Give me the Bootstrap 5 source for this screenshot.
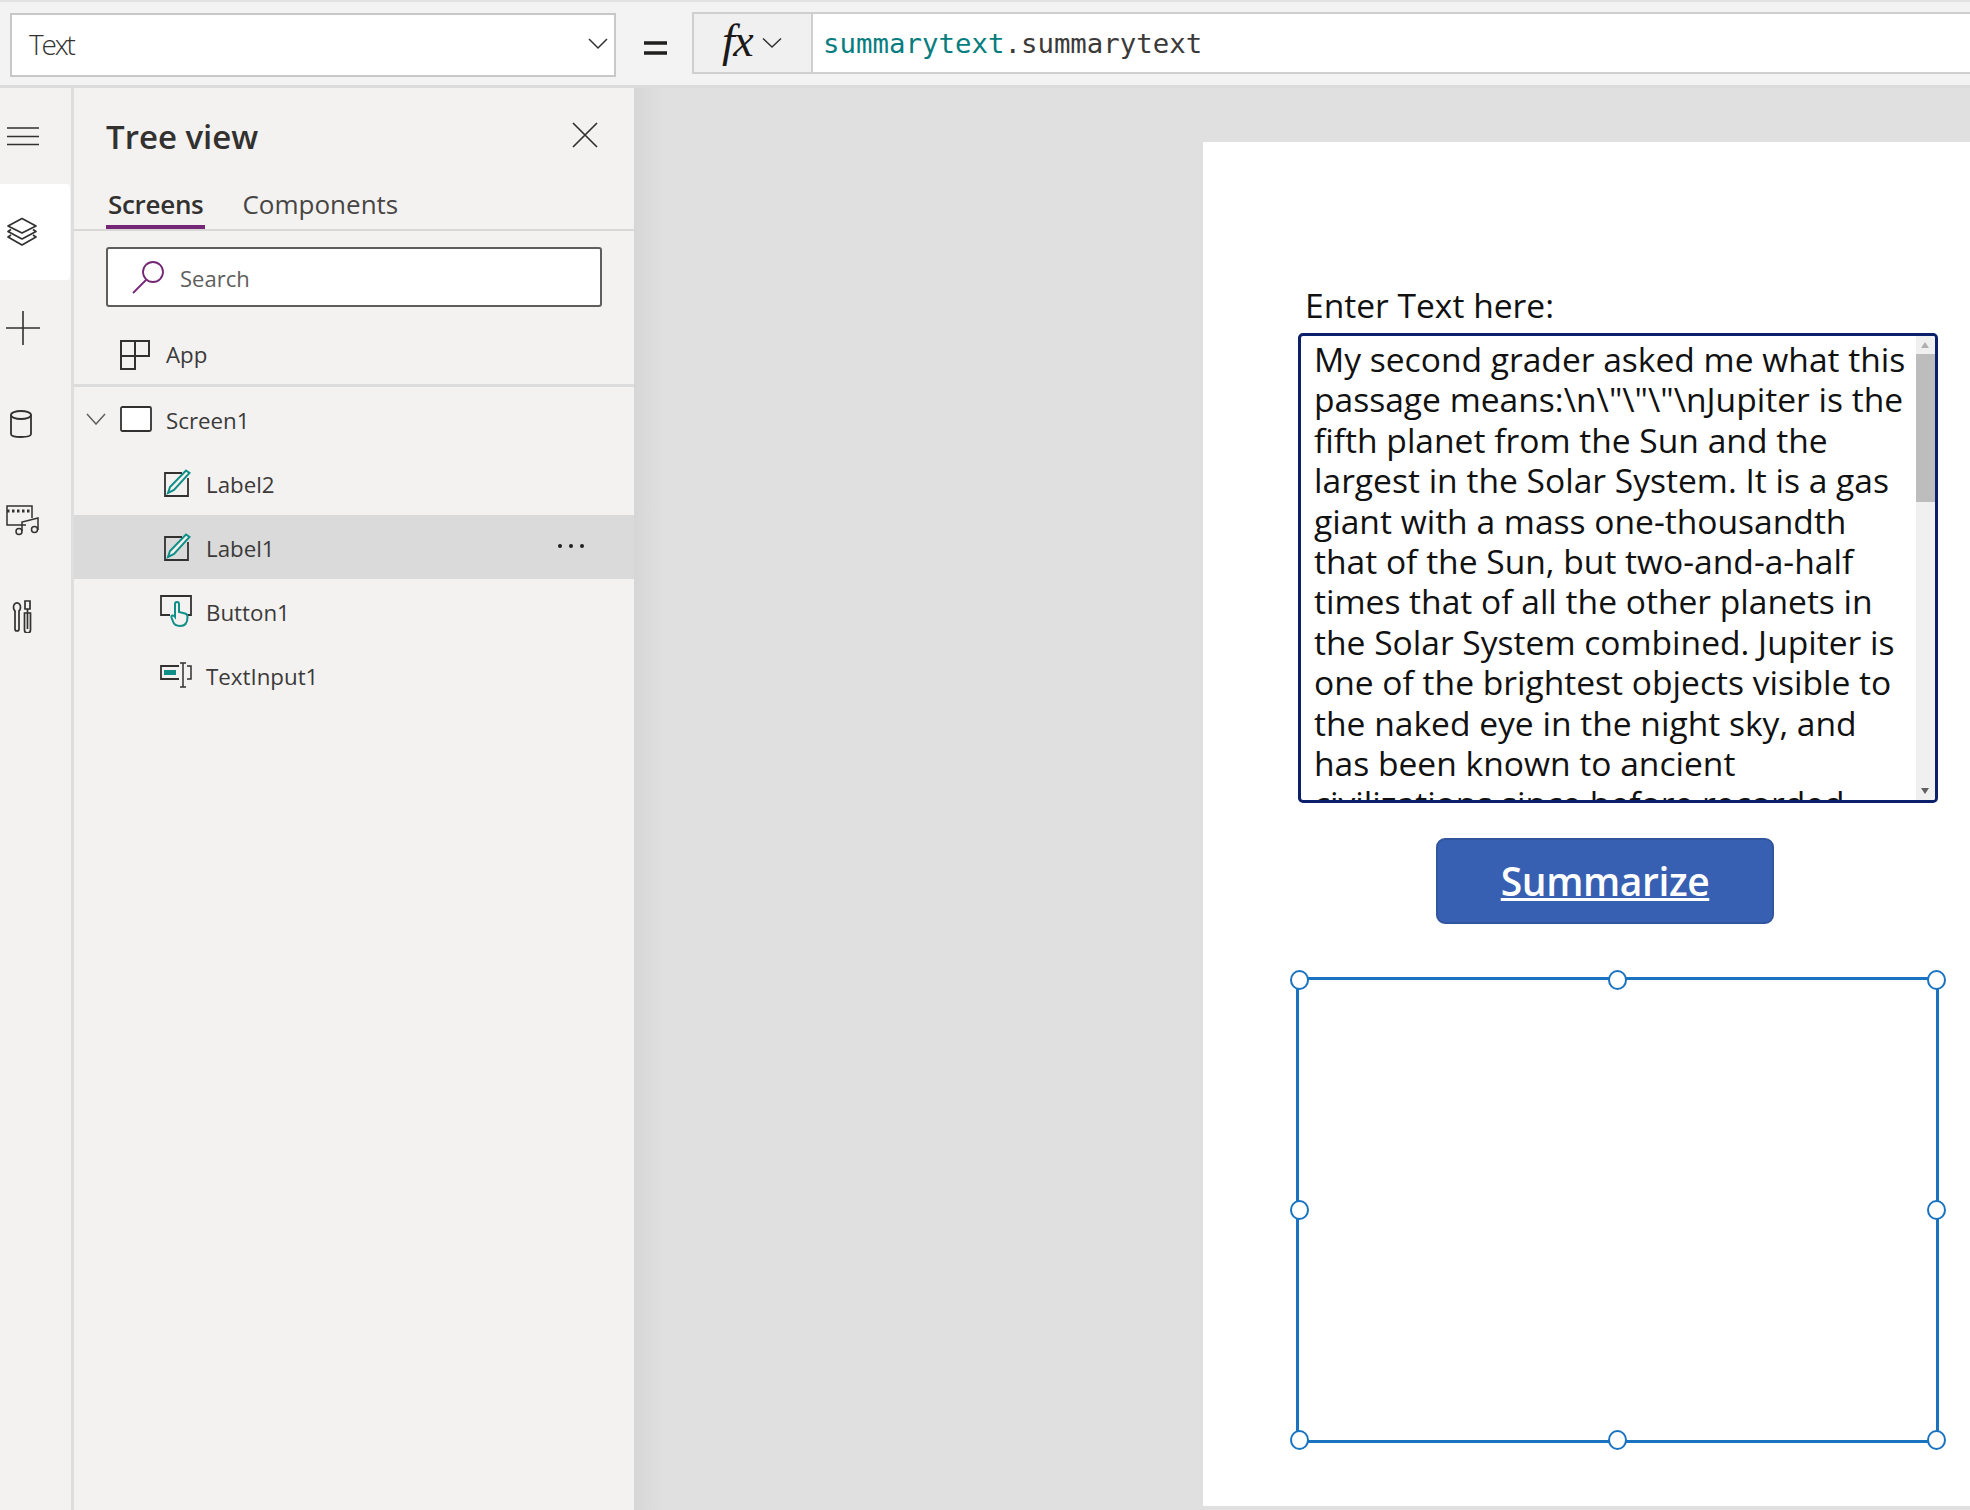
<!DOCTYPE html>
<html lang="en">
<head>
<meta charset="UTF-8" />
<meta name="viewport" content="width=device-width, initial-scale=1.0" />
<title>Tree view</title>
<link href="https://cdn.jsdelivr.net/npm/bootstrap@5.3.0/dist/css/bootstrap.min.css" rel="stylesheet" />
<style>
  body { font-family: "Open Sans", sans-serif; color: #323130; background: #e0e0e0; width: 1970px; height: 1510px; overflow: hidden; }
  svg { display: block; flex: none; }

  /* top formula bar */
  .fbar { height: 88px; flex: none; background: #f3f3f3; border-top: 2px solid #e2e2e2; border-bottom: 3px solid #dcdcdc; padding: 3px 0 0 10px; }
  .prop-box { width: 606px; height: 64px; background: #fff; border: 2px solid #c8c8c8; padding: 0 6px 2px 17px; font-size: 28px; font-weight: 300; letter-spacing: -2.2px; }
  .eq-sign { width: 76px; padding-left: 3px; margin-top: 5px; }
  .fx-box { width: 121px; height: 62px; background: #f0f0f0; border: 2px solid #cfcfcf; gap: 10px; padding-left: 28px; margin-bottom: 4px; }
  .fx-text { font-family: "Liberation Serif", serif; font-style: italic; font-size: 46px; line-height: 1; color: #1b1a19; letter-spacing: -1.5px; margin-top: -5px; }
  .formula { height: 62px; background: #fff; border: 2px solid #cfcfcf; border-left: 0; border-right: 0; padding: 1px 0 0 10px; margin-bottom: 4px; font-family: "DejaVu Sans Mono", monospace; font-size: 27.4px; color: #3b3a39; }
  .formula b { font-weight: 400; color: #077d80; }

  /* left rail */
  .rail { width: 74px; flex: none; background: #f3f2f1; border-right: 3px solid #dedede; }
  .rail-item { height: 96px; padding-left: 6px; }
  .rail-on { background: #fff; width: 70px; border-radius: 0 3px 3px 0; }

  /* tree panel */
  .tree { width: 560px; flex: none; background: #f3f2f1; }
  .tree-head { height: 98px; padding: 0 36px 0 32px; }
  .tree-title { font-size: 33px; font-weight: 600; color: #323130; }
  .tree-tabs { height: 45px; border-bottom: 2px solid #d8d8d8; padding-left: 32px; gap: 35px; font-size: 26px; line-height: 36px; }
  .tree-tab { height: 43px; color: #484644; padding: 0 2px; }
  .tab-on { border-bottom: 4px solid #742774; color: #323130; font-weight: 600; letter-spacing: -.3px; }
  .find-box { width: 496px; height: 60px; margin: 16px 0 0 32px; background: #fff; border: 2px solid #605e5c; border-radius: 3px; padding-left: 24px; gap: 14px; }
  .find-box input { border: 0; padding: 3px 0 0; background: transparent; font-size: 22px; border-radius: 0; box-shadow: none; }
  .find-box input::placeholder { color: #605e5c; }
  .tree-app { height: 61px; margin-top: 19px; padding-left: 46px; border-bottom: 3px solid #dcdcdc; }
  .tree-row { height: 64px; font-size: 22.3px; color: #3b3a39; gap: 14px; }
  .tree-row span { padding-top: 3px; }
  .lvl-0 { padding-left: 12px; }
  .lvl-1 { padding-left: 90px; }
  .lvl-1b { padding-left: 86px; }
  .row-on { background: #dadada; }
  .row-dots { gap: 7px; padding-right: 50px; padding-top: 0 !important; margin-bottom: 2px; }
  .row-dots i { width: 4px; height: 4px; border-radius: 50%; background: #201f1e; }

  /* work area and free canvas */
  .work { background: #e0e0e0; min-width: 0; padding-top: 54px; }
  .work-shade { width: 30px; background: linear-gradient(90deg, #d6d6d6, #e0e0e0); }
  .stage { width: 767px; height: 1364px; margin-left: 569px; background: #fff; position: relative; }
  .lbl-enter { position: absolute; left: 102px; top: 141px; font-size: 33.6px; line-height: 44px; color: #111; }
  .txt-input { position: absolute; left: 95px; top: 191px; width: 640px; height: 470px; border: 3px solid #0b1f6b; border-radius: 5px; overflow: hidden; background: #fff; }
  .txt-body { padding: 0 0 0 13px; margin-top: 3px; font-size: 33.6px; line-height: 40.4px; color: #111; white-space: nowrap; }
  .sbar { position: absolute; right: 0; top: 0; bottom: 0; width: 19px; background: #f0f0f0; }
  .sbar-thumb { position: absolute; left: 0; right: 0; top: 18px; height: 148px; background: #bdbdbd; }
  .sbar-up, .sbar-dn { position: absolute; left: 5px; width: 0; height: 0; border-left: 4.5px solid transparent; border-right: 4.5px solid transparent; }
  .sbar-up { top: 6px; border-bottom: 6px solid #b0b0b0; }
  .sbar-dn { bottom: 6px; border-top: 6px solid #606060; }
  .go-btn { position: absolute; left: 233px; top: 696px; width: 338px; height: 86px; background: #3860b2; border: 2px solid #31569f; border-radius: 9px; color: #fff; font-size: 39px; font-weight: 600; text-decoration: underline; letter-spacing: -.4px; padding: 1px 0 0; }
  .sel-box { position: absolute; left: 93px; top: 835px; width: 643px; height: 466px; border: 3px solid #1a73c0; }
  .sel-dot { position: absolute; width: 19px; height: 20px; margin: -10px 0 0 -9.5px; background: #fff; border: 2.5px solid #1a73c0; border-radius: 50%; }
</style>
</head>
<body>

<div class="d-flex flex-column vh-100">

  <!-- formula bar -->
  <div class="fbar d-flex align-items-center">
    <div class="prop-box d-flex align-items-center justify-content-between">
      <span>Text</span>
      <svg width="20" height="12" viewBox="0 0 20 12"><path d="M1 1l9 9 9-9" fill="none" stroke="#323130" stroke-width="1.5"/></svg>
    </div>
    <div class="eq-sign d-flex justify-content-center">
      <svg width="23" height="14" viewBox="0 0 23 14"><path d="M0 2h23M0 12h23" stroke="#201f1e" stroke-width="3.4"/></svg>
    </div>
    <div class="fx-box d-flex align-items-center">
      <span class="fx-text">fx</span>
      <svg width="20" height="12" viewBox="0 0 20 12"><path d="M1 1.500l9 8.500 9-8.500" fill="none" stroke="#323130" stroke-width="1.500"/></svg>
    </div>
    <div class="formula flex-grow-1 d-flex align-items-center"><span><b>summarytext</b>.summarytext</span></div>
  </div>

  <div class="d-flex flex-grow-1" style="min-height:0">

    <!-- left rail -->
    <div class="rail">
      <div class="rail-item d-flex align-items-center">
        <svg width="34" height="20" viewBox="0 0 34 20"><path d="M1 2h32M1 10.500h32M1 18.500h32" stroke="#323130" stroke-width="1.600"/></svg>
      </div>
      <div class="rail-item rail-on d-flex align-items-center">
        <svg width="32" height="30" viewBox="0 0 32 30" fill="none" stroke="#323130" stroke-width="1.700" stroke-linejoin="round"><path d="M16 1.500L30 9 16 16 2 9z"/><path d="M5 12.500L2 14.500l14 7.500 14-7.500-3-2"/><path d="M5 18L2 20l14 8 14-8-3-2"/></svg>
      </div>
      <div class="rail-item d-flex align-items-center">
        <svg width="34" height="34" viewBox="0 0 34 34"><path d="M0 17h34M17 0v34" stroke="#323130" stroke-width="1.600"/></svg>
      </div>
      <div class="rail-item d-flex align-items-center">
        <svg width="34" height="30" viewBox="0 0 34 30" fill="none" stroke="#323130" stroke-width="1.800"><ellipse cx="15" cy="6" rx="10" ry="4"/><path d="M5 6v19c0 2 3 3 10 3s10-1 10-3V6"/></svg>
      </div>
      <div class="rail-item d-flex align-items-center">
        <svg width="34" height="32" viewBox="0 0 34 32" fill="none" stroke="#323130" stroke-width="1.500"><path d="M20 21H1V2h25v12"/><path d="M1 7h25" stroke-dasharray="2.500 2.500" stroke-width="3"/><path d="M16 27V18l16-4v12"/><circle cx="13" cy="27.500" r="3"/><circle cx="28.500" cy="25.500" r="3"/></svg>
      </div>
      <div class="rail-item d-flex align-items-center" style="padding-left:11px">
        <svg width="22" height="34" viewBox="0 0 22 34" fill="none" stroke="#323130" stroke-width="1.700"><path d="M4 12a3.500 4.500 0 1 1 4 0v18a2 2 0 0 1-4 0z"/><path d="M14 2h5v8h-5zM16.500 10v20M13.500 14h6v17a3 3 0 0 1-6 0z"/></svg>
      </div>
    </div>

    <!-- tree view -->
    <div class="tree d-flex flex-column">
      <div class="tree-head d-flex align-items-center justify-content-between">
        <span class="tree-title">Tree view</span>
        <svg width="26" height="26" viewBox="0 0 26 26" style="margin-bottom:4px"><path d="M1 1l24 24M25 1L1 25" stroke="#323130" stroke-width="1.700"/></svg>
      </div>
      <div class="tree-tabs d-flex">
        <div class="tree-tab tab-on">Screens</div>
        <div class="tree-tab">Components</div>
      </div>
      <div class="find-box d-flex align-items-center">
        <svg width="34" height="34" viewBox="0 0 34 34" fill="none" stroke="#742774" stroke-width="1.800"><circle cx="21" cy="12" r="10"/><path d="M14 20L1 33"/></svg>
        <input class="form-control" type="text" placeholder="Search" />
      </div>
      <div class="tree-app d-flex align-items-center" style="gap:16px">
        <svg width="30" height="30" viewBox="0 0 30 30" fill="none" stroke="#323130" stroke-width="2"><path d="M1 1h28v15H15v13H1zM15 1v15M1 16h14"/></svg>
        <span class="tree-row d-flex align-items-center">App</span>
      </div>

      <div class="tree-row lvl-0 d-flex align-items-center" style="gap:12px">
        <svg width="20" height="12" viewBox="0 0 20 12"><path d="M1 1l9 10 9-10" fill="none" stroke="#605e5c" stroke-width="1.500"/></svg>
        <svg width="32" height="26" viewBox="0 0 32 26" style="margin-left:2px"><rect x="1" y="1" width="30" height="24" rx="1.500" fill="#fff" stroke="#323130" stroke-width="1.800"/></svg>
        <span style="margin-left:2px">Screen1</span>
      </div>
      <div class="tree-row lvl-1 d-flex align-items-center">
        <svg width="28" height="28" viewBox="0 0 28 28"><path d="M18 4H1v23h23V9" fill="none" stroke="#323130" stroke-width="1.800"/><path d="M22 1.500l3.500 2.500L10 21l-6 3 2-6z" fill="#f3f2f1" stroke="#0f8f87" stroke-width="2"/></svg>
        <span>Label2</span>
      </div>
      <div class="tree-row lvl-1 row-on d-flex align-items-center">
        <svg width="28" height="28" viewBox="0 0 28 28"><path d="M18 4H1v23h23V9" fill="none" stroke="#323130" stroke-width="1.800"/><path d="M22 1.500l3.500 2.500L10 21l-6 3 2-6z" fill="#f3f2f1" stroke="#0f8f87" stroke-width="2"/></svg>
        <span class="flex-grow-1">Label1</span>
        <span class="row-dots d-flex"><i></i><i></i><i></i></span>
      </div>
      <div class="tree-row lvl-1b d-flex align-items-center">
        <svg width="32" height="32" viewBox="0 0 32 32" fill="none"><path d="M10 20H1V1h30v19h-7" stroke="#323130" stroke-width="1.800"/><path d="M15 22V9a2 2 0 0 1 4 0v8l6 1.500c2 .5 2.500 2 2.500 3.500 0 6-2 9-7.500 9-4 0-6-1.500-7-4.500l-1.500-4c-.5-2 1.500-3 3.500-.5z" fill="#f3f2f1" stroke="#0f8f87" stroke-width="2"/></svg>
        <span>Button1</span>
      </div>
      <div class="tree-row lvl-1b d-flex align-items-center">
        <svg width="32" height="26" viewBox="0 0 32 26" fill="none"><path d="M19 4H1v13h18" stroke="#323130" stroke-width="1.800"/><rect x="4" y="8" width="12" height="5" fill="#0f8f87"/><path d="M27 4h4v13h-4M23 1v24M20 1h6M20 25h6" stroke="#323130" stroke-width="1.500"/></svg>
        <span>TextInput1</span>
      </div>
    </div>

    <!-- work area -->
    <div class="work flex-grow-1 position-relative">
      <div class="work-shade position-absolute top-0 bottom-0 start-0"></div>
      <div class="stage">
        <div class="lbl-enter">Enter Text here:</div>
        <div class="txt-input">
          <div class="txt-body">My second grader asked me what this<br>passage means:\n\"\"\"\nJupiter is the<br>fifth planet from the Sun and the<br>largest in the Solar System. It is a gas<br>giant with a mass one-thousandth<br>that of the Sun, but two-and-a-half<br>times that of all the other planets in<br>the Solar System combined. Jupiter is<br>one of the brightest objects visible to<br>the naked eye in the night sky, and<br>has been known to ancient<br>civilizations since before recorded</div>
          <div class="sbar"><div class="sbar-up"></div><div class="sbar-thumb"></div><div class="sbar-dn"></div></div>
        </div>
        <button class="go-btn btn" type="button">Summarize</button>
        <div class="sel-box">
          <span class="sel-dot" style="left:0;top:0"></span>
          <span class="sel-dot" style="left:50%;top:0"></span>
          <span class="sel-dot" style="left:100%;top:0"></span>
          <span class="sel-dot" style="left:0;top:50%"></span>
          <span class="sel-dot" style="left:100%;top:50%"></span>
          <span class="sel-dot" style="left:0;top:100%"></span>
          <span class="sel-dot" style="left:50%;top:100%"></span>
          <span class="sel-dot" style="left:100%;top:100%"></span>
        </div>
      </div>
    </div>

  </div>
</div>

<script src="https://cdn.jsdelivr.net/npm/bootstrap@5.3.0/dist/js/bootstrap.bundle.min.js"></script>
</body>
</html>
